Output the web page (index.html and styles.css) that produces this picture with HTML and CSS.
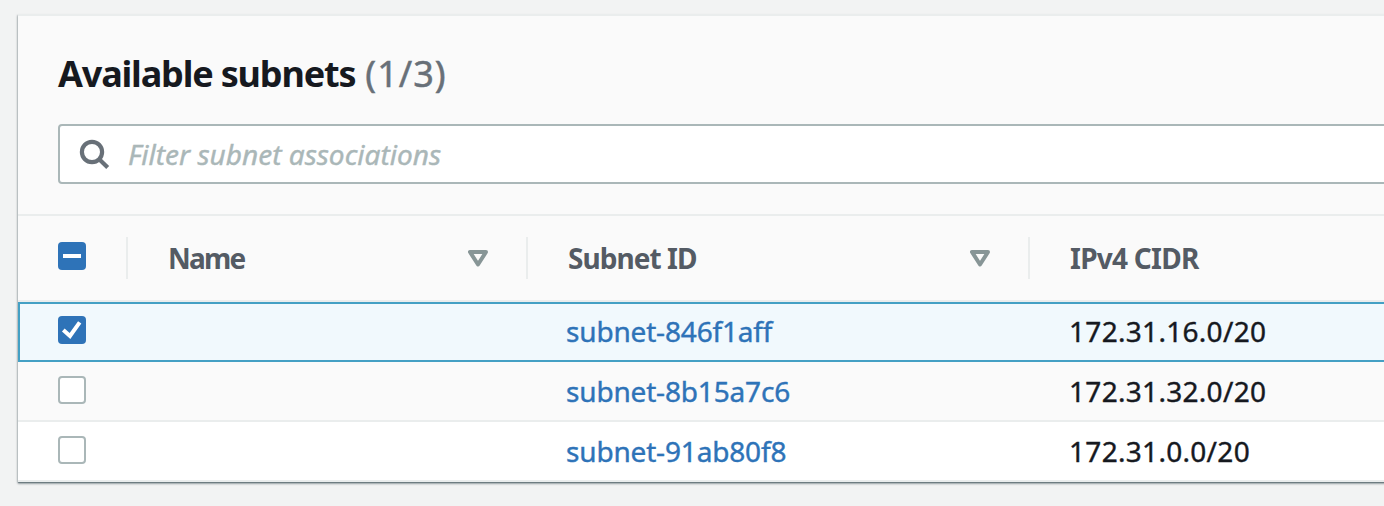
FILE: index.html
```html
<!DOCTYPE html>
<html lang="en">
<head>
<meta charset="utf-8">
<title>Available subnets</title>
<link rel="stylesheet" href="styles.css">
</head>
<body>
<main class="panel">
  <header class="panel-header">
    <h2 class="title"><span class="title-text">Available subnets</span><span class="counter">(1/3)</span></h2>
    <div class="search">
      <svg class="search-icon" width="32" height="32" viewBox="0 0 32 32"><circle cx="14" cy="14" r="10.1"/><path d="M21.2 21.2L29.7 29.6"/></svg>
      <span class="placeholder">Filter subnet associations</span>
    </div>
  </header>
  <section class="table">
    <div class="row head">
      <div class="cell select"><span class="checkbox checked"><svg width="28" height="28" viewBox="0 0 28 28"><path d="M5 14H23"/></svg></span></div>
      <div class="cell sortable"><span class="label name">Name</span><svg class="sort" width="20" height="17" viewBox="0 0 20 17"><path d="M2 2H18L10 14.5Z"/></svg></div>
      <div class="cell sortable"><span class="label">Subnet ID</span><svg class="sort" width="20" height="17" viewBox="0 0 20 17"><path d="M2 2H18L10 14.5Z"/></svg></div>
      <div class="cell"><span class="label cidr">IPv4 CIDR</span></div>
    </div>
    <div class="row body selected">
      <div class="cell select"><span class="checkbox checked"><svg width="28" height="28" viewBox="0 0 28 28"><path d="M5.3 14L12 20L21.7 6.3"/></svg></span></div>
      <div class="cell"></div>
      <div class="cell"><a class="link first">subnet-846f1aff</a></div>
      <div class="cell"><span class="ip">172.31.16.0/20</span></div>
    </div>
    <div class="row body striped">
      <div class="cell select"><span class="checkbox"></span></div>
      <div class="cell"></div>
      <div class="cell"><a class="link">subnet-8b15a7c6</a></div>
      <div class="cell"><span class="ip">172.31.32.0/20</span></div>
    </div>
    <div class="row body">
      <div class="cell select"><span class="checkbox"></span></div>
      <div class="cell"></div>
      <div class="cell"><a class="link">subnet-91ab80f8</a></div>
      <div class="cell"><span class="ip">172.31.0.0/20</span></div>
    </div>
  </section>
</main>
</body>
</html>
```
FILE: styles.css
```css
* { box-sizing: border-box; }
body {
  margin: 0;
  padding: 14px 0 0 18px;
  height: 506px;
  overflow: hidden;
  background: #f2f3f3;
  color: #16191f;
  font: 28px/36px "Noto Sans", sans-serif;
  white-space: nowrap;
}
.panel {
  width: 1400px;
  background: #fff;
  border-top: 2px solid #eaeded;
  box-shadow: 0 2px 2px 0 rgba(0, 28, 36, .3), 0 1px 1px 0 rgba(0, 28, 36, .3), -1px 1px 2px 0 rgba(0, 28, 36, .15);
}
.panel-header {
  height: 200px;
  padding: 36px 0 0 40px;
  background: #fafafa;
  border-bottom: 2px solid #eaeded;
}
.title {
  display: flex;
  gap: 10px;
  margin: 0 0 28px;
  font-size: 36px;
  line-height: 44px;
}
.title-text { letter-spacing: -1.17px; }
.counter { color: #687078; font-weight: 400; letter-spacing: 1px; -webkit-text-stroke: .5px; }
.search {
  display: flex;
  align-items: center;
  height: 60px;
  padding-left: 18px;
  gap: 18px;
  background: #fff;
  border: 2px solid #aab7b8;
  border-radius: 4px;
}
.search-icon { fill: none; stroke: #687078; stroke-width: 4.2; }
.placeholder { color: #aab7b8; font-style: italic; -webkit-text-stroke: .4px; }
.row {
  display: grid;
  grid-template-columns: 110px 400px 502px 1fr;
  align-items: center;
  border-bottom: 2px solid #eaeded;
}
.head { height: 86px; background: #fafafa; color: #545b64; font-weight: 700; }
.head .cell { height: 42px; border-right: 2px solid #eaeded; }
.body { height: 60px; -webkit-text-stroke: .4px; }
.cell { display: flex; align-items: center; padding-left: 40px; }
.body .cell { padding-left: 38px; }
.body .cell:last-child { padding-left: 39px; }
.row .select { padding-left: 40px; }
.sortable { justify-content: space-between; padding-right: 38px; }
.sort { fill: none; stroke: #879596; stroke-width: 4; stroke-linejoin: round; }
.label { letter-spacing: -.95px; }
.name { letter-spacing: -1.8px; }
.cidr { letter-spacing: -.75px; }
.selected { position: relative; background: #f1f9fd; }
.selected::after {
  content: "";
  position: absolute;
  inset: 0 0 -2px;
  border: 2px solid #44a0c4;
}
.striped { background: #fafafa; }
.checkbox {
  width: 28px;
  height: 28px;
  margin-bottom: 3px;
  background: #fff;
  border: 2px solid #aab7b8;
  border-radius: 4px;
}
.head .checkbox { margin-bottom: 4px; }
.checkbox.checked { border: 0; background: #2e73b8; }
.checkbox svg { display: block; fill: none; stroke: #fff; stroke-width: 4; }
.link { color: #2e73b8; letter-spacing: -.17px; }
.ip { letter-spacing: .3px; }
```
